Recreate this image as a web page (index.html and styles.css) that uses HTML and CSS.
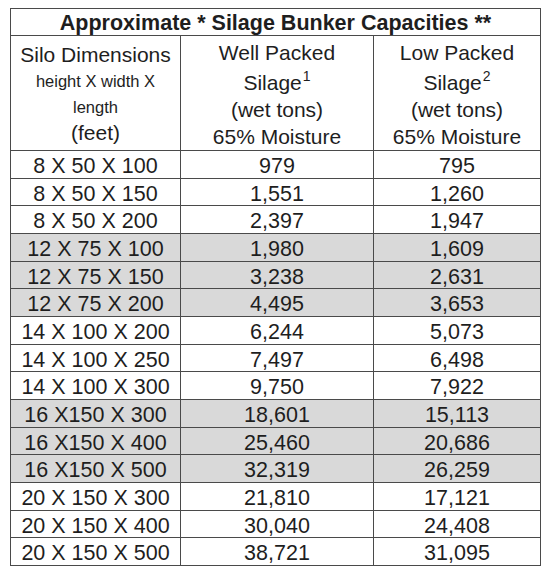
FILE: index.html
```html
<!DOCTYPE html>
<html>
<head>
<meta charset="utf-8">
<link rel="stylesheet" href="styles.css">
</head>
<body>
<div class="sheet">
  <div class="cell title">Approximate * Silage Bunker Capacities **</div>
  <div class="cell head head-dim">
    <div class="ln big">Silo Dimensions</div>
    <div class="ln small">height X width X</div>
    <div class="ln small">length</div>
    <div class="ln big">(feet)</div>
  </div>
  <div class="cell head head-val">
    <div class="ln">Well Packed</div>
    <div class="ln sil">Silage<span class="sup">1</span></div>
    <div class="ln">(wet tons)</div>
    <div class="ln">65% Moisture</div>
  </div>
  <div class="cell head head-val">
    <div class="ln">Low Packed</div>
    <div class="ln sil">Silage<span class="sup">2</span></div>
    <div class="ln">(wet tons)</div>
    <div class="ln">65% Moisture</div>
  </div>

  <div class="cell">8 X 50 X 100</div><div class="cell">979</div><div class="cell">795</div>
  <div class="cell">8 X 50 X 150</div><div class="cell">1,551</div><div class="cell">1,260</div>
  <div class="cell">8 X 50 X 200</div><div class="cell">2,397</div><div class="cell">1,947</div>
  <div class="cell shade">12 X 75 X 100</div><div class="cell shade">1,980</div><div class="cell shade">1,609</div>
  <div class="cell shade">12 X 75 X 150</div><div class="cell shade">3,238</div><div class="cell shade">2,631</div>
  <div class="cell shade">12 X 75 X 200</div><div class="cell shade">4,495</div><div class="cell shade">3,653</div>
  <div class="cell">14 X 100 X 200</div><div class="cell">6,244</div><div class="cell">5,073</div>
  <div class="cell">14 X 100 X 250</div><div class="cell">7,497</div><div class="cell">6,498</div>
  <div class="cell">14 X 100 X 300</div><div class="cell">9,750</div><div class="cell">7,922</div>
  <div class="cell shade">16 X150 X 300</div><div class="cell shade">18,601</div><div class="cell shade">15,113</div>
  <div class="cell shade">16 X150 X 400</div><div class="cell shade">25,460</div><div class="cell shade">20,686</div>
  <div class="cell shade">16 X150 X 500</div><div class="cell shade">32,319</div><div class="cell shade">26,259</div>
  <div class="cell">20 X 150 X 300</div><div class="cell">21,810</div><div class="cell">17,121</div>
  <div class="cell">20 X 150 X 400</div><div class="cell">30,040</div><div class="cell">24,408</div>
  <div class="cell">20 X 150 X 500</div><div class="cell">38,721</div><div class="cell">31,095</div>
</div>
</body>
</html>
```

FILE: styles.css
```css
html, body {
  margin: 0;
  background: #ffffff;
}
body {
  padding: 8px 0 0 10px;
  font-family: "Liberation Sans", Arial, sans-serif;
  color: #1e1e1e;
}
.sheet {
  display: grid;
  width: 531px;
  grid-template-columns: 169px 192px 166px;
  grid-template-rows: 26px 114px repeat(15, 26.67px);
  gap: 1px;
  padding: 1px;
  box-sizing: border-box;
  background: #4a4a4a;
}
.cell {
  background: #ffffff;
  font-size: 21.5px;
  line-height: 24px;
  padding-top: 3px;
  text-align: center;
  white-space: nowrap;
  overflow: visible;
}
.shade {
  background: #d9d9d9;
}
.title {
  grid-column: 1 / -1;
  font-weight: bold;
  line-height: 26px;
  padding-top: 1px;
}
.head {
  font-size: 21px;
  line-height: 27px;
}
.head-dim {
  padding-top: 6px;
}
.head-dim .ln {
  line-height: 26px;
}
.head-dim .big {
  font-size: 21px;
}
.head-dim .small {
  font-size: 16.5px;
}
.head-val {
  padding-top: 3px;
}
.head-val .sil {
  margin-top: 3px;
}
.sup {
  font-size: 14px;
  line-height: 0;
  vertical-align: 9px;
  margin-left: 1px;
}
```
